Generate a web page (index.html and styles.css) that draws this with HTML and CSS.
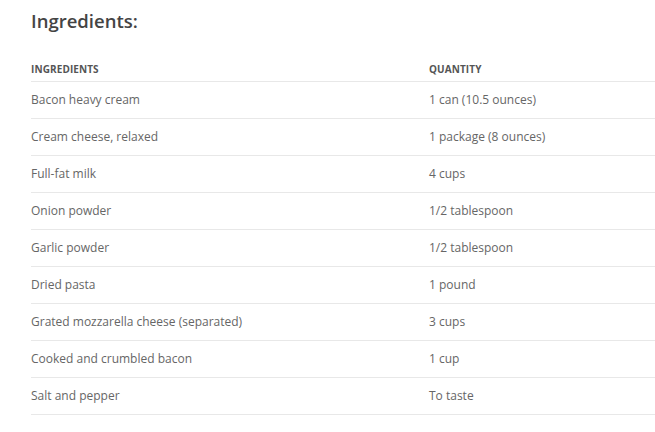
FILE: index.html
```html
<!DOCTYPE html>
<html>
<head>
<meta charset="utf-8">
<link rel="stylesheet" href="styles.css">
</head>
<body>
<div class="page">
  <h2 class="title">Ingredients:</h2>
  <table class="tbl">
    <thead>
      <tr><th class="c1">INGREDIENTS</th><th>QUANTITY</th></tr>
    </thead>
    <tbody>
      <tr><td class="c1">Bacon heavy cream</td><td>1 can (10.5 ounces)</td></tr>
      <tr><td class="c1">Cream cheese, relaxed</td><td>1 package (8 ounces)</td></tr>
      <tr><td class="c1">Full-fat milk</td><td>4 cups</td></tr>
      <tr><td class="c1">Onion powder</td><td>1/2 tablespoon</td></tr>
      <tr><td class="c1">Garlic powder</td><td>1/2 tablespoon</td></tr>
      <tr><td class="c1">Dried pasta</td><td>1 pound</td></tr>
      <tr><td class="c1">Grated mozzarella cheese (separated)</td><td>3 cups</td></tr>
      <tr><td class="c1">Cooked and crumbled bacon</td><td>1 cup</td></tr>
      <tr><td class="c1">Salt and pepper</td><td>To taste</td></tr>
    </tbody>
  </table>
</div>
</body>
</html>
```
FILE: styles.css
```css
html, body { margin: 0; padding: 0; background: #fff; }
body { font-family: "Open Sans", "Liberation Sans", sans-serif; color: #555; }
.page { padding: 8px 0 0 31px; }
.title { margin: 0; font-size: 18.5px; font-weight: 600; color: #444; line-height: 26px; }
.tbl { margin-top: 23px; border-collapse: collapse; width: 624px; }
.tbl th, .tbl td { text-align: left; padding: 0; border-bottom: 1px solid #e8e8e8; }
.tbl th { font-size: 10px; font-weight: 700; color: #555; height: 24px; vertical-align: middle; letter-spacing: 0.1px; }
.tbl td { font-size: 12px; height: 35px; padding-bottom: 1px; color: #666; vertical-align: middle; }
.tbl .c1 { width: 398px; }
```
